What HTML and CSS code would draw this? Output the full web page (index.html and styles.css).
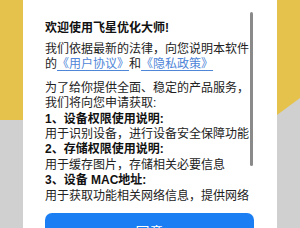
FILE: index.html
```html
<!DOCTYPE html>
<html lang="zh-CN">
<head>
<meta charset="utf-8">
<link rel="stylesheet" href="styles.css">
</head>
<body>
<div class="side side-left"></div>
<div class="dialog">
  <div class="scroll">
    <div class="content">
      <div class="title">欢迎使用飞星优化大师!</div>
      <p class="para">我们依据最新的法律，向您说明本软件的<a class="link">《用户协议》</a>和<a class="link">《隐私政策》</a></p>
      <p class="para">为了给你提供全面、稳定的产品服务，我们将向您申请获取:<br>
        <b class="head">1、设备权限使用说明:</b><br>
        用于识别设备，进行设备安全保障功能<br>
        <b class="head">2、存储权限使用说明:</b><br>
        用于缓存图片，存储相关必要信息<br>
        <b class="head">3、设备 MAC地址:</b><br>
        用于获取功能相关网络信息，提供网络服务</p>
    </div>
    <div class="thumb"></div>
  </div>
  <button class="agree">同意</button>
</div>
<div class="side side-right">
  <svg width="23" height="228" viewBox="0 0 23 228"><polygon points="0,0 23,0 23,98 0,115" fill="#e4c24b"/></svg>
</div>
</body>
</html>
```
FILE: styles.css
```css
html, body {
  margin: 0;
  padding: 0;
}
body {
  width: 300px;
  height: 228px;
  overflow: hidden;
  display: flex;
  font-family: "Liberation Sans", "Noto Sans CJK SC", sans-serif;
  background: #d0d0d0;
}
.side {
  width: 23px;
  flex: none;
  height: 228px;
}
.side-left {
  background: linear-gradient(#e4c24b 0, #e4c24b 120px, #d0d0d0 120px);
}
.side-right {
  background: #d0d0d0;
}
.side-right svg {
  display: block;
}
.dialog {
  width: 232px;
  flex: none;
  background: #fff;
  padding: 12px 0 0 22px;
  display: flex;
  flex-direction: column;
}
.scroll {
  position: relative;
  height: 190px;
  width: 210px;
  overflow: hidden;
  flex: none;
}
.content {
  width: 205px;
  padding-top: 8px;
}
.title {
  font-size: 12px;
  font-weight: bold;
  line-height: 16px;
  color: #111;
}
.para {
  margin: 6px 0 0;
  font-size: 12px;
  line-height: 15.4px;
  color: #222;
}
.para + .para {
  margin-top: 8px;
}
.link {
  color: #4f86d8;
  text-decoration: underline;
  text-underline-offset: 2px;
}
.head {
  font-weight: bold;
  color: #111;
}
.thumb {
  position: absolute;
  right: 2px;
  top: 0;
  width: 3px;
  height: 154px;
  border-radius: 2px;
  background: #8a8a8a;
}
.agree {
  margin-top: 11px;
  width: 209px;
  height: 36px;
  flex: none;
  border: none;
  border-radius: 7px;
  background: #1b7ff3;
  color: #fff;
  font-family: "Liberation Sans", "Noto Sans CJK SC", sans-serif;
  font-size: 14px;
  padding: 0;
}
```
